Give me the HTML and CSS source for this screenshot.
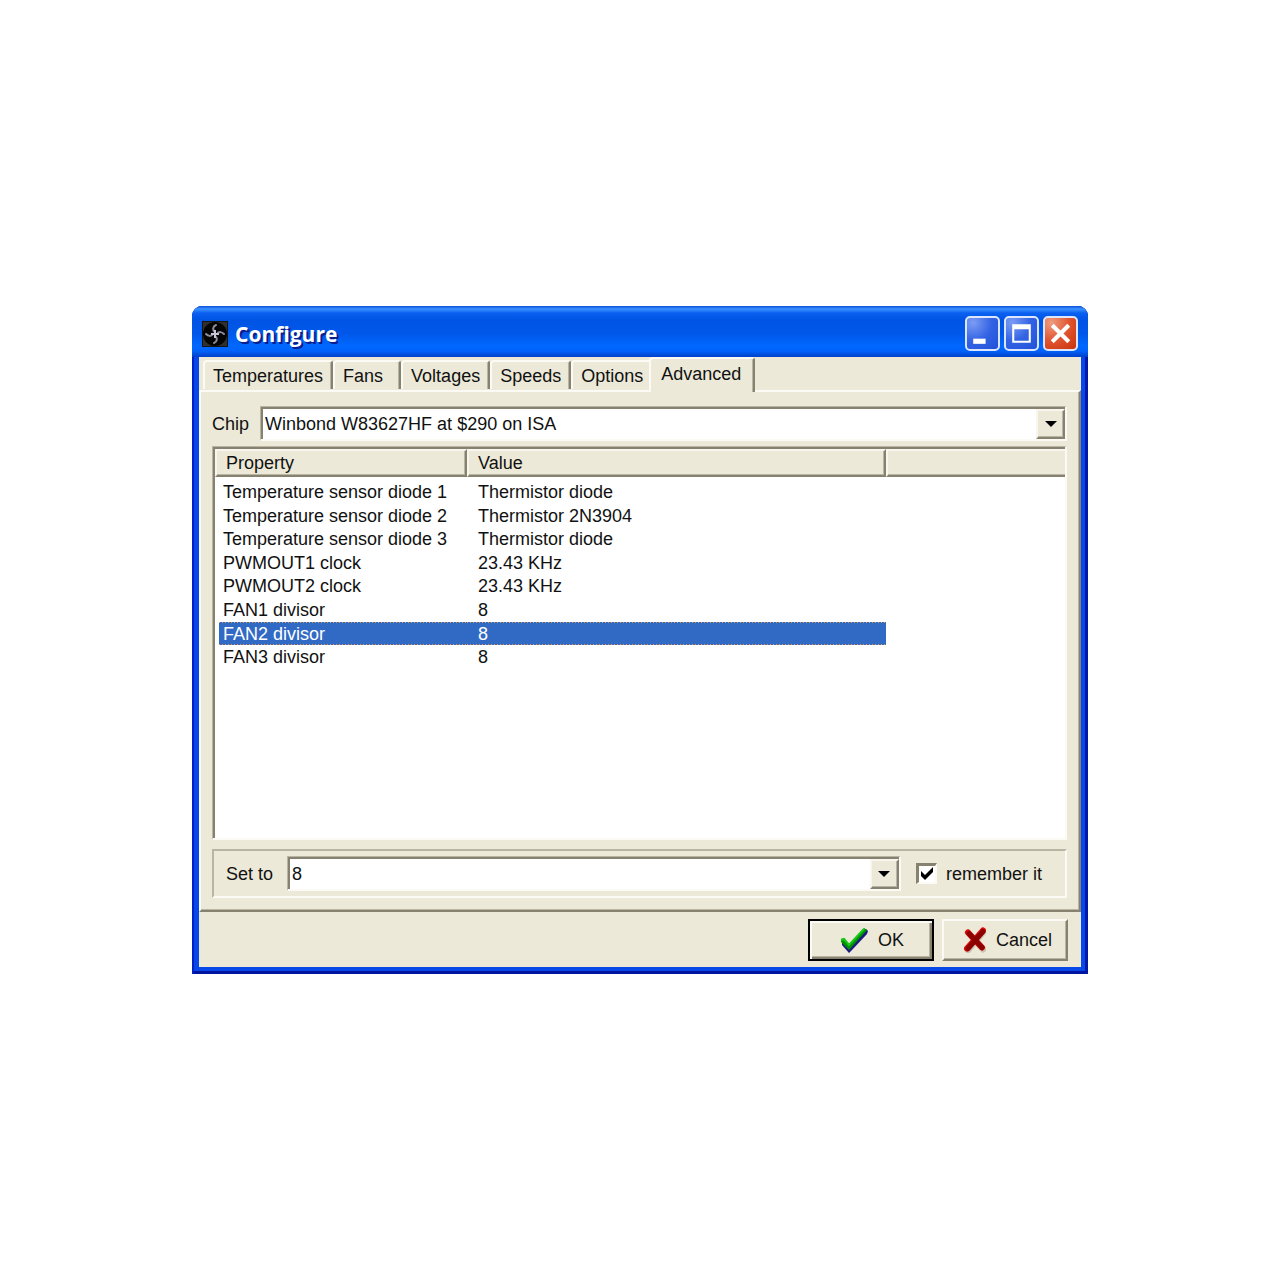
FILE: index.html
```
<!DOCTYPE html>
<html lang="en">
<head>
  <meta charset="UTF-8">
  <title>Configure</title>
  <meta name="viewport" content="width=device-width, initial-scale=1">
  <link rel="stylesheet" href="styles.css">
</head>
<body>
  <main class="window">
    <header class="titlebar">
      <svg class="app-icon" viewBox="0 0 26 26" aria-hidden="true">
        <rect width="26" height="26" fill="#151515"/>
        <rect x="1" y="1" width="24" height="24" fill="#303030"/>
        <circle cx="13" cy="13" r="12" fill="#050505"/>
        <g fill="none" stroke="#8e8b9c" stroke-width="2" stroke-linecap="round">
          <path d="M13 11 C10 9 11 5 14 4"/>
          <path d="M15 13 C17 10 20 11 22 13"/>
          <path d="M13 15 C16 17 15 21 12 22"/>
          <path d="M11 13 C9 16 6 15 4 13"/>
        </g>
        <path d="M13 9v8M9 13h8" stroke="#c9c6d8" stroke-width="2"/>
      </svg>
      <h1>Configure</h1>
      <button class="win-btn" type="button" aria-label="Minimize">
        <svg viewBox="0 0 30 30"><path d="M6 20h12v5H6z" fill="#fff"/></svg>
      </button>
      <button class="win-btn" type="button" aria-label="Maximize">
        <svg viewBox="0 0 30 30"><path d="M6 6h18v18H6zM8 11v11h14V11z" fill="#fff" fill-rule="evenodd"/></svg>
      </button>
      <button class="win-btn close" type="button" aria-label="Close">
        <svg viewBox="0 0 30 30"><path d="M7 7L23 23M23 7L7 23" stroke="#fff" stroke-width="4"/></svg>
      </button>
    </header>

    <div class="client">
      <div class="tabs" role="tablist">
        <button type="button" role="tab">Temperatures</button>
        <button type="button" role="tab" class="wide">Fans</button>
        <button type="button" role="tab">Voltages</button>
        <button type="button" role="tab">Speeds</button>
        <button type="button" role="tab">Options</button>
        <button type="button" role="tab" class="active" aria-selected="true">Advanced</button>
      </div>

      <section class="page">
        <div class="chip-row">
          <label for="chip">Chip</label>
          <div class="combo">
            <select id="chip">
              <option>Winbond W83627HF at $290 on ISA</option>
            </select>
            <span class="arrow"><svg viewBox="0 0 12 6"><path d="M0 0h12L6 6z"/></svg></span>
          </div>
        </div>

        <div class="list">
          <table>
            <thead>
              <tr><th class="col-property">Property</th><th class="col-value">Value</th><th></th></tr>
            </thead>
            <tbody>
              <tr><td>Temperature sensor diode 1</td><td>Thermistor diode</td><td></td></tr>
              <tr><td>Temperature sensor diode 2</td><td>Thermistor 2N3904</td><td></td></tr>
              <tr><td>Temperature sensor diode 3</td><td>Thermistor diode</td><td></td></tr>
              <tr><td>PWMOUT1 clock</td><td>23.43 KHz</td><td></td></tr>
              <tr><td>PWMOUT2 clock</td><td>23.43 KHz</td><td></td></tr>
              <tr><td>FAN1 divisor</td><td>8</td><td></td></tr>
              <tr class="selected"><td>FAN2 divisor</td><td>8</td><td></td></tr>
              <tr><td>FAN3 divisor</td><td>8</td><td></td></tr>
            </tbody>
          </table>
        </div>

        <div class="set-row">
          <label for="setto">Set to</label>
          <div class="combo">
            <select id="setto">
              <option>8</option>
            </select>
            <span class="arrow"><svg viewBox="0 0 12 6"><path d="M0 0h12L6 6z"/></svg></span>
          </div>
          <label class="remember">
            <input type="checkbox" checked>
            remember it
          </label>
        </div>
      </section>

      <footer>
        <button type="button" class="btn default">
          <svg viewBox="0 0 28 26" aria-hidden="true">
            <path d="M2 14l3 0 5 5L26 2l2 2-1 3L12 23l-3 3-7-8z" fill="#1a1a80"/>
            <path d="M1 12l3-1 5 6L24 1l3 2L9 23 1 15z" fill="#009400"/>
            <path d="M1 13l3-1 5 6L24 2" fill="none" stroke="#18c818" stroke-width="2"/>
          </svg>
          OK
        </button>
        <button type="button" class="btn">
          <svg class="cross" viewBox="0 0 22 25" aria-hidden="true">
            <path d="M3 4L18 21M19 3L3 22" stroke="#c8c4b4" stroke-width="6" stroke-linecap="round" transform="translate(1 1)"/>
            <path d="M4 5L18 20M19 3L3 21" stroke="#e00808" stroke-width="6" stroke-linecap="round"/>
            <path d="M5 6L18 20M19 4L4 21" stroke="#8c0000" stroke-width="5" stroke-linecap="round"/>
          </svg>
          Cancel
        </button>
      </footer>
    </div>
  </main>
</body>
</html>
```
FILE: styles.css
```
* {
  box-sizing: border-box;
}
body {
  margin: 0;
  min-height: 100vh;
  display: flex;
  align-items: center;
  justify-content: center;
  background: #fff;
  color: #111;
  font: 18px/22px "Liberation Sans", Arial, sans-serif;
}
button, select, input {
  font: inherit;
  color: inherit;
  margin: 0;
}

/* window frame */
.window {
  width: 70%;
  padding: 0 7px 7px;
  border-radius: 10px 10px 0 0;
  background: #0848e8;
  box-shadow: inset 2px 0 #0020c8, inset -3px 0 #0018a8, inset 0 -3px #0014a0;
}
.titlebar {
  display: flex;
  align-items: center;
  gap: 4px;
  height: 51px;
  margin: 0 -7px;
  padding: 4px 10px 0;
  border-radius: 10px 10px 0 0;
  background: linear-gradient(#0a50d8 0, #3c92ff 3px, #0a60f0 7px, #0054e4 14px, #0058ea 28px, #0068ff 40px, #0062fa 45px, #0040c8 51px);
}
.app-icon {
  width: 26px;
  height: 26px;
}
h1 {
  flex: 1;
  margin: 0 0 0 3px;
  font: bold 21px/28px "Open Sans", sans-serif;
  color: #fff;
  text-shadow: 2px 2px #0a1e8c;
}
.win-btn {
  width: 35px;
  height: 35px;
  padding: 0;
  border: 2px solid #dde6ff;
  border-radius: 5px;
  background: radial-gradient(circle at 20% 15%, #7c9cf4, #3464e4 50%, #2050d8);
}
.win-btn svg {
  display: block;
}
.close {
  background: radial-gradient(circle at 20% 15%, #f09c80, #e05430 50%, #c83408);
}

.client {
  background: #ece9d8;
}

/* tabs */
.tabs {
  display: flex;
  align-items: flex-end;
  height: 33px;
  padding-left: 4px;
}
.tabs button {
  height: 29px;
  margin-bottom: 1px;
  padding: 0 8px;
  border: solid;
  border-width: 2px 2px 0 2px;
  border-color: #fbfaf5 #86826f #fbfaf5 #fbfaf5;
  border-radius: 4px 3px 0 0;
  background: #ece9d8;
  box-shadow: inset -1px 0 #b8b5a5;
}
.tabs .wide {
  padding-right: 16px;
}
.tabs .active {
  height: 35px;
  margin: 0 0 -2px -4px;
  padding: 0 12px 4px 10px;
}
.page {
  padding: 14px 12px 12px 11px;
  border: 2px solid;
  border-color: #fbfaf5 #86826f #86826f #fbfaf5;
  box-shadow: inset -1px -1px #b8b5a5;
}

/* drop-downs */
.combo {
  position: relative;
  flex: 1;
  height: 35px;
  padding: 2px 0 0 2px;
  border: solid;
  border-width: 1px 2px 2px 1px;
  border-color: #b8b5a5 #fbfaf5 #fbfaf5 #b8b5a5;
  background: #fff;
  box-shadow: inset 2px 2px #86826f;
}
.combo select {
  width: 100%;
  height: 100%;
  padding: 0 32px 0 2px;
  border: 0;
  appearance: none;
  background: none;
}
.arrow {
  position: absolute;
  top: 2px;
  right: 0;
  bottom: 0;
  width: 29px;
  display: grid;
  place-items: center;
  border: 2px solid;
  border-color: #f8f6ee #86826f #86826f #f8f6ee;
  background: #ece9d8;
  box-shadow: inset -1px -1px #b8b5a5;
  pointer-events: none;
}
.arrow svg {
  width: 12px;
  height: 6px;
}
.chip-row {
  display: flex;
  align-items: center;
  gap: 11px;
}

/* property list */
.list {
  min-height: 394px;
  margin-top: 5px;
  padding: 2px 0 0 2px;
  border: solid;
  border-width: 1px 2px 2px 1px;
  border-color: #b8b5a5 #fbfaf5 #fbfaf5 #b8b5a5;
  background: #fff;
  box-shadow: inset 2px 2px #86826f;
}
table {
  width: 100%;
  height: 220px;
  table-layout: fixed;
  border-spacing: 0;
}
.col-property {
  width: 252px;
}
.col-value {
  width: 419px;
}
th {
  height: 28px;
  padding: 0 9px;
  border: 2px solid;
  border-color: #f8f6ee #86826f #86826f #f8f6ee;
  background: #ece9d8;
  box-shadow: inset -1px -1px #b8b5a5;
  font-weight: normal;
  text-align: left;
}
th:last-child {
  border-right: 0;
  box-shadow: inset 0 -1px #b8b5a5;
}
td {
  padding: 0 11px;
  line-height: 20px;
}
td:first-child {
  padding-left: 4px;
  border-left: 4px solid #fff;
}
tbody tr:first-child td {
  padding-top: 3px;
}
/* focus rectangle runs across both cells */
.selected td:not(:last-child) {
  background:
    repeating-linear-gradient(90deg, #e0a050 0 1px, #316ac5 1px 3px) top / 100% 1px no-repeat,
    repeating-linear-gradient(90deg, #e0a050 0 1px, #316ac5 1px 3px) bottom / 100% 1px no-repeat,
    #316ac5;
  color: #fff;
}

/* value editor */
.set-row {
  display: flex;
  align-items: center;
  margin-top: 9px;
  padding: 5px 23px 5px 12px;
  border: 2px solid;
  border-color: #b8b5a5 #fbfaf5 #fbfaf5 #b8b5a5;
}
.set-row .combo {
  margin: 0 15px 0 14px;
}
.remember {
  display: flex;
  align-items: center;
  gap: 9px;
}
.remember input {
  width: 21px;
  height: 21px;
  appearance: none;
  border: solid;
  border-width: 3px 2px 2px 3px;
  border-color: #86826f #fbfaf5 #fbfaf5 #86826f;
  background: #fff;
}
.remember input:checked {
  background: #fff url("data:image/svg+xml,%3Csvg xmlns='http://www.w3.org/2000/svg' viewBox='0 0 16 16'%3E%3Cpath d='M2 5v5l4 4 8-8V1L6 9z'/%3E%3C/svg%3E");
}

footer {
  display: flex;
  justify-content: flex-end;
  gap: 8px;
  padding: 7px 13px 6px;
}
.btn {
  display: flex;
  align-items: center;
  justify-content: flex-end;
  gap: 10px;
  width: 126px;
  height: 42px;
  padding: 0 14px;
  border: 2px solid;
  border-color: #fbfaf5 #86826f #86826f #fbfaf5;
  background: #ece9d8;
  box-shadow: inset -1px -1px #b8b5a5;
}
.btn svg {
  width: 28px;
  height: 26px;
}
.btn .cross {
  width: 22px;
}
.default {
  padding-right: 28px;
  border-color: #000;
  box-shadow: inset 2px 2px #fbfaf5, inset -2px -2px #86826f, inset -3px -3px #b8b5a5;
}
```
